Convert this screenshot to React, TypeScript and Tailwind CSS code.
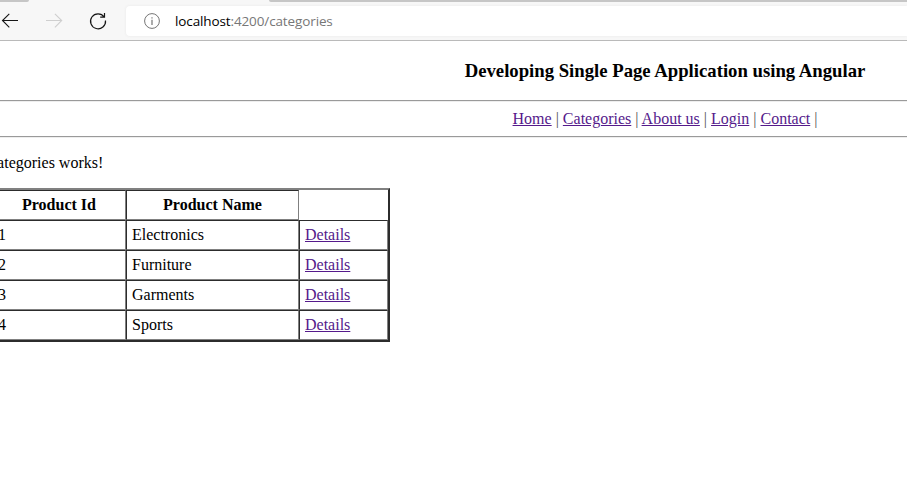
import React from "react";

const links = ["Home", "Categories", "About us", "Login", "Contact"];
const products = ["Electronics", "Furniture", "Garments", "Sports"];

const cell =
  "h-[30px] border border-t-[#2c2c2c] border-l-[#2c2c2c] border-b-[#808080] border-r-[#808080] p-[5px] leading-[18px]";

function Rule() {
  return <hr className="h-[2px] border border-t-[#9a9a9a] border-l-[#9a9a9a] border-b-[#eeeeee] border-r-[#eeeeee]" />;
}

function Toolbar() {
  return (
    <header className="h-[41px] border-b border-[#bababa] bg-[#f7f7f7]">
      <div className="flex h-[2px] justify-between">
        <div className="w-[29px] rounded-br-[3px] bg-[#c6c6c6]" />
        <div className="w-[638px] rounded-bl-[3px] bg-[#c6c6c6]" />
      </div>
      <div className="flex pt-[4px]">
        <svg className="h-[30px] w-[126px] shrink-0" viewBox="0 6 126 30" fill="none" strokeWidth="1.1">
          <path d="M18 20.5H2.5M9.3 13.8L2.5 20.5L9.3 27.3" stroke="#151515" />
          <path d="M46 20.5H61.5M54.9 13.8L61.7 20.5L54.9 27.3" stroke="#cfcfcf" />
          <path d="M104.2 17A7.5 7.5 0 1 0 105.5 20.5M104.5 13V17.2H100.2" stroke="#151515" strokeWidth="1.2" />
        </svg>
        <div className="flex h-[30px] flex-1 items-center rounded-l-[4px] bg-white pl-[18px] shadow-[0_0_3px_#e8e8e8]">
          <svg className="h-[16px] w-[16px]" viewBox="0 0 16 16" fill="none" stroke="#757575">
            <circle cx="8" cy="8" r="7.4" strokeWidth="1" />
            <path d="M8 6.8V12M8 4.2V5.5" strokeWidth="1.2" />
          </svg>
          <span className="ml-[15px] font-['Open_Sans',sans-serif] text-[13.5px] leading-[18px] tracking-[-0.12px] text-[#777777]">
            <span className="text-black">localhost</span>:4200/categories
          </span>
        </div>
      </div>
    </header>
  );
}

export default function App() {
  return (
    <div className="h-[481px] w-[907px] overflow-hidden bg-white">
      <Toolbar />
      <main className="-ml-[10px] w-[1350px] font-['Liberation_Serif',serif] text-[16px] leading-[18px] text-black">
        <h3 className="pt-[19px] pb-[19px] text-center text-[18.72px] leading-[21px] font-bold">
          Developing Single Page Application using Angular
        </h3>
        <Rule />
        <nav className="h-[34px] pt-[8px] text-center">
          {links.map((label) => (
            <React.Fragment key={label}>
              <a href="#" className="text-[#551a8b] underline">{label}</a>
              <span className="text-[#555555]"> | </span>
            </React.Fragment>
          ))}
        </nav>
        <Rule />
        <p className="mt-[16px] mb-[16px]">categories works!</p>
        <table className="w-[400px] table-fixed border-separate border-spacing-0 border-2 border-t-[#808080] border-l-[#808080] border-r-[#2c2c2c] border-b-[#2c2c2c]">
          <colgroup>
            <col className="w-[134px]" />
            <col className="w-[173px]" />
            <col className="w-[89px]" />
          </colgroup>
          <thead>
            <tr>
              <th className={cell}>Product Id</th>
              <th className={cell}>Product Name</th>
            </tr>
          </thead>
          <tbody>
            {products.map((name, i) => (
              <tr key={name}>
                <td className={cell}>{i + 1}</td>
                <td className={cell}>{name}</td>
                <td className={cell}>
                  <a href="#" className="text-[#551a8b] underline">Details</a>
                </td>
              </tr>
            ))}
          </tbody>
        </table>
      </main>
    </div>
  );
}
